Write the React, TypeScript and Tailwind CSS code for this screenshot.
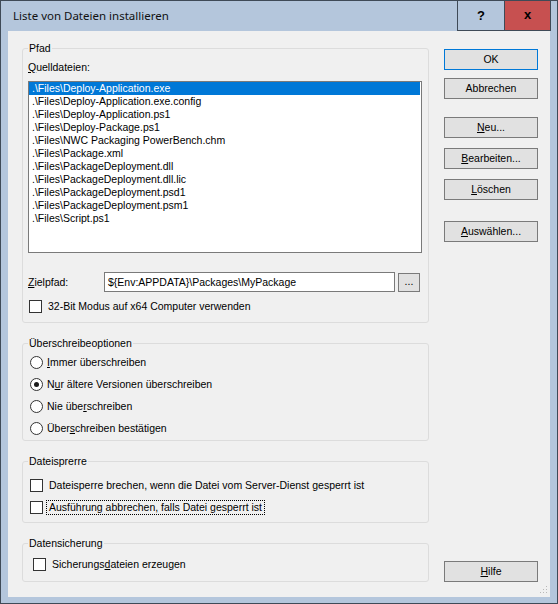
import type { ReactNode } from 'react';

const sourceFiles = [
  '.\\Files\\Deploy-Application.exe',
  '.\\Files\\Deploy-Application.exe.config',
  '.\\Files\\Deploy-Application.ps1',
  '.\\Files\\Deploy-Package.ps1',
  '.\\Files\\NWC Packaging PowerBench.chm',
  '.\\Files\\Package.xml',
  '.\\Files\\PackageDeployment.dll',
  '.\\Files\\PackageDeployment.dll.lic',
  '.\\Files\\PackageDeployment.psd1',
  '.\\Files\\PackageDeployment.psm1',
  '.\\Files\\Script.ps1',
];

function GroupBox({ title, className = '', children }: { title: string; className?: string; children: ReactNode }) {
  return (
    <fieldset className={`w-[407px] rounded-[3px] border border-[#dcdcdc] pl-[5px] pr-[6px] ${className}`}>
      <legend className="px-[1px] leading-[13px]">{title}</legend>
      {children}
    </fieldset>
  );
}

function CheckBox({ children, focused = false, className = '' }: { children: ReactNode; focused?: boolean; className?: string }) {
  return (
    <div className={`flex items-center ${className}`}>
      <span className="h-[13px] w-[13px] shrink-0 border border-[#333333] bg-white" />
      {focused ? (
        <span className="ml-[3px] border border-dotted border-black px-[2px] leading-[13px]">{children}</span>
      ) : (
        <span className="ml-[6px] leading-[13px]">{children}</span>
      )}
    </div>
  );
}

function Radio({ children, checked = false }: { children: ReactNode; checked?: boolean }) {
  return (
    <div className="ml-[2px] flex h-[22px] items-center">
      <span className="flex h-[13px] w-[13px] items-center justify-center rounded-full border border-[#333333] bg-white">
        {checked && <span className="h-[5px] w-[5px] rounded-full bg-[#1a1a1a]" />}
      </span>
      <span className="ml-[4px] leading-[13px]">{children}</span>
    </div>
  );
}

function Button({ children, primary = false, className = '' }: { children: ReactNode; primary?: boolean; className?: string }) {
  return (
    <div
      className={`flex h-[21px] w-[94px] items-center justify-center border bg-[#e1e1e1] leading-[13px] ${
        primary ? 'border-[#0078d7]' : 'border-[#7a7a7a]'
      } ${className}`}
    >
      {children}
    </div>
  );
}

export default function App() {
  return (
    <div className="flex h-[604px] w-[558px] flex-col border border-[#3f4a57] bg-[#b4c6dc] font-['Liberation_Sans',Arial,sans-serif] text-[10.5px] text-black">
      {/* Titelleiste */}
      <div className="flex h-[30px] items-center">
        <div className="flex-1 pl-[12px] font-['Noto_Sans',sans-serif] text-[11.5px] text-[#111111]">
          Liste von Dateien installieren
        </div>
        <div className="mr-[6px] flex h-[30px]">
          <div className="flex w-[47px] items-center justify-center border-b border-l border-[#3f4a57] text-[13px] font-bold">
            ?
          </div>
          <div className="flex w-[47px] items-center justify-center border-x border-b border-[#3f4a57] bg-[#c75050] pb-[1px] text-[13px] font-bold">
            x
          </div>
        </div>
      </div>

      {/* Dialoginhalt */}
      <div className="relative mx-[7px] flex h-[566px] bg-[#f0f0f0]">
        <div className="ml-[14px] pt-[11px]">
          <GroupBox title="Pfad" className="pb-[9px]">
            <div className="mt-[6px] leading-[13px]">
              <u>Q</u>uelldateien:
            </div>
            <div className="mt-[7px] h-[172px] w-[394px] border border-[#7a7a7a] bg-white">
              {sourceFiles.map((file, index) => (
                <div
                  key={file}
                  className={`h-[13px] pl-[3px] leading-[13px] ${index === 0 ? 'mr-[1px] bg-[#0078d7] text-white' : ''}`}
                >
                  {file}
                </div>
              ))}
            </div>
            <div className="mt-[19px] flex h-[20px] items-center">
              <div className="w-[76px] leading-[13px]">
                <u>Z</u>ielpfad:
              </div>
              <div className="flex h-[20px] w-[291px] items-center border border-[#7a7a7a] bg-white pl-[3px] leading-[13px]">
                {'${Env:APPDATA}\\Packages\\MyPackage'}
              </div>
              <div className="ml-[3px] flex h-[19px] w-[22px] items-center justify-center border border-[#7a7a7a] bg-[#e1e1e1] pb-[2px] leading-[13px]">
                ...
              </div>
            </div>
            <CheckBox className="ml-[1px] mt-[8px] h-[13px]">32-Bit Modus auf x64 Computer verwenden</CheckBox>
          </GroupBox>

          <GroupBox title="Überschreibeoptionen" className="mt-[14px] pb-[1px]">
            <div className="mt-[1px]">
              <Radio>
                <u>I</u>mmer überschreiben
              </Radio>
              <Radio checked>
                N<u>u</u>r ältere Versionen überschreiben
              </Radio>
              <Radio>
                Nie übe<u>r</u>schreiben
              </Radio>
              <Radio>
                Über<u>s</u>chreiben bestätigen
              </Radio>
            </div>
          </GroupBox>

          <GroupBox title="Dateisprerre" className="mt-[14px] pb-[4px]">
            <div className="mt-[6px]">
              <CheckBox className="ml-[2px] h-[22px]">
                Dateisperre brechen, wenn die Datei vom Server-Dienst gesperrt ist
              </CheckBox>
              <CheckBox className="ml-[2px] h-[22px]" focused>
                Ausführung abbrechen, falls Datei gesperrt ist
              </CheckBox>
            </div>
          </GroupBox>

          <GroupBox title="Datensicherung" className="mt-[14px] pb-[6px]">
            <CheckBox className="ml-[5px] mt-[3px] h-[22px]">
              Sicherungs<u>d</u>ateien erzeugen
            </CheckBox>
          </GroupBox>
        </div>

        {/* Schaltflächen rechts */}
        <div className="ml-[15px] flex flex-col pb-[15px] pt-[18px]">
          <Button primary>OK</Button>
          <Button className="mt-[8px]">Abbrechen</Button>
          <Button className="mt-[18px]">
            <span>
              <u>N</u>eu...
            </span>
          </Button>
          <Button className="mt-[10px]">
            <span>
              <u>B</u>earbeiten...
            </span>
          </Button>
          <Button className="mt-[10px]">
            <span>
              <u>L</u>öschen
            </span>
          </Button>
          <Button className="mt-[21px]">
            <span>
              <u>A</u>uswählen...
            </span>
          </Button>
          <Button className="mt-auto">
            <span>
              <u>H</u>ilfe
            </span>
          </Button>
        </div>

        {/* Größengriff */}
        <svg className="absolute bottom-[3px] right-[2px]" width="8" height="8" viewBox="0 0 8 8">
          <rect x="6" y="0" width="1" height="1" fill="#b8b8b8" />
          <rect x="3" y="3" width="1" height="1" fill="#b8b8b8" />
          <rect x="6" y="3" width="1" height="1" fill="#b8b8b8" />
          <rect x="0" y="6" width="1" height="1" fill="#b8b8b8" />
          <rect x="3" y="6" width="1" height="1" fill="#b8b8b8" />
          <rect x="6" y="6" width="1" height="1" fill="#b8b8b8" />
        </svg>
      </div>
    </div>
  );
}
